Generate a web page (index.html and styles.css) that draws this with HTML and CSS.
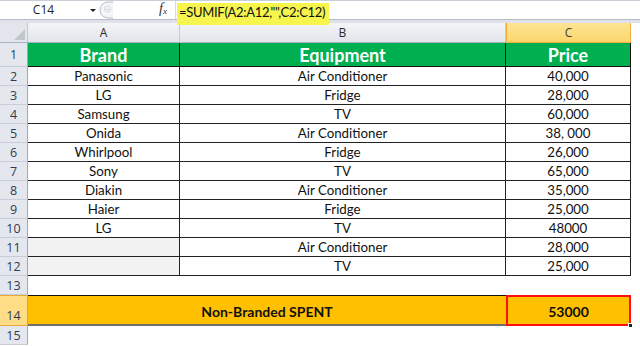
FILE: index.html
```html
<!DOCTYPE html>
<html>
<head>
<meta charset="utf-8">
<link rel="stylesheet" href="styles.css">
</head>
<body>
<div class="fbar">
  <div class="namebox">C14</div>
  <div class="nbarrow"><span class="tri"></span></div>
  <div class="mid">
    <svg class="pill" width="16" height="18" viewBox="0 0 16 18">
      <path d="M14 1 H9 A8 8 0 0 0 9 17 H14" fill="#f4f5f7" stroke="#b6bcc5" stroke-width="1"/>
      <circle cx="8.5" cy="8" r="3" fill="none" stroke="#d3d7dc" stroke-width="1"/>
      <path d="M6.5 8.5 H10.5" stroke="#d3d7dc" stroke-width="1"/>
    </svg>
    <span class="fx">f<sub>x</sub></span>
  </div>
  <div class="formula"><span class="hl">=SUMIF(A2:A12,"",C2:C12)</span></div>
</div>
<div class="gap"></div>
<div class="sheet">
  <div class="corner"><span class="ctri"></span></div>
  <div class="ch">A</div>
  <div class="ch">B</div>
  <div class="ch sel">C</div>
  <div class="blank"></div>

  <div class="rh">1</div>
  <div class="hd">Brand</div>
  <div class="hd">Equipment</div>
  <div class="hd">Price</div>
  <div class="blank"></div>

  <div class="rh">2</div><div class="c">Panasonic</div><div class="c">Air Conditioner</div><div class="c">40,000</div><div class="blank"></div>
  <div class="rh">3</div><div class="c">LG</div><div class="c">Fridge</div><div class="c">28,000</div><div class="blank"></div>
  <div class="rh">4</div><div class="c">Samsung</div><div class="c">TV</div><div class="c">60,000</div><div class="blank"></div>
  <div class="rh">5</div><div class="c">Onida</div><div class="c">Air Conditioner</div><div class="c">38, 000</div><div class="blank"></div>
  <div class="rh">6</div><div class="c">Whirlpool</div><div class="c">Fridge</div><div class="c">26,000</div><div class="blank"></div>
  <div class="rh">7</div><div class="c">Sony</div><div class="c">TV</div><div class="c">65,000</div><div class="blank"></div>
  <div class="rh">8</div><div class="c">Diakin</div><div class="c">Air Conditioner</div><div class="c">35,000</div><div class="blank"></div>
  <div class="rh">9</div><div class="c">Haier</div><div class="c">Fridge</div><div class="c">25,000</div><div class="blank"></div>
  <div class="rh">10</div><div class="c">LG</div><div class="c">TV</div><div class="c">48000</div><div class="blank"></div>
  <div class="rh">11</div><div class="c empty"></div><div class="c">Air Conditioner</div><div class="c">28,000</div><div class="blank"></div>
  <div class="rh">12</div><div class="c empty"></div><div class="c">TV</div><div class="c">25,000</div><div class="blank"></div>

  <div class="rh">13</div><div class="w"></div><div class="w"></div><div class="w"></div><div class="blank"></div>

  <div class="rh sel14">14</div>
  <div class="tot">Non-Branded SPENT</div>
  <div class="totv"><span class="handle"></span>53000</div>
  <div class="blank"></div>

  <div class="rh r15">15</div><div class="w"></div><div class="w"></div><div class="w"></div><div class="blank"></div>
</div>
</body>
</html>
```
FILE: styles.css
```css
* { box-sizing: border-box; }
html, body { margin: 0; padding: 0; background: #fff; }
body { width: 640px; height: 346px; overflow: hidden; font-family: Lato, "Liberation Sans", sans-serif; }

.fbar {
  height: 20px;
  display: flex;
  align-items: stretch;
  border-top: 1px solid #c9cfd7;
  border-bottom: 1px solid #b4bcc7;
  background: #fff;
}
.namebox {
  width: 87px;
  font-family: "Open Sans", "Liberation Sans", sans-serif;
  font-size: 12px;
  color: #1e1e1e;
  text-align: center;
  line-height: 18px;
}
.nbarrow { width: 12px; display: flex; align-items: center; justify-content: center; }
.tri { width: 0; height: 0; border-left: 3px solid transparent; border-right: 3px solid transparent; border-top: 3px solid #222; }
.mid {
  width: 76px;
  display: flex;
  align-items: center;
  justify-content: space-between;
  padding-right: 8px;
}
.pill { display: block; }
.fx {
  font-family: "Liberation Serif", serif;
  font-style: italic;
  font-size: 14px;
  color: #333;
  line-height: 18px;
}
.fx sub { font-size: 9px; vertical-align: -1px; }
.formula {
  flex: 1;
  border-left: 1px solid #d6dae0;
  padding-left: 1px;
  display: flex;
  align-items: flex-start;
}
.hl {
  position: relative;
  z-index: 2;
  margin-top: 2px;
  height: 22px;
  background: #f6f54e;
  padding: 0 4px 0 2px;
  font-family: Lato, "Liberation Sans", sans-serif;
  font-size: 13px;
  letter-spacing: -0.3px;
  line-height: 19px;
  color: #111;
}
.gap { height: 3px; background: #dfe3e9; }

.sheet {
  display: grid;
  grid-template-columns: 28px 152px 326px 125px 9px;
  grid-template-rows: 20px 24px repeat(12, 19px) 31px 19px;
}
.corner {
  background: #e3e7ed;
  border-right: 1px solid #c3c9d2;
  border-bottom: 1px solid #a9b3c0;
  position: relative;
}
.ctri {
  position: absolute; right: 2px; bottom: 2px;
  width: 0; height: 0;
  border-left: 11px solid transparent;
  border-bottom: 11px solid #c2c7cd;
}
.ch {
  background: linear-gradient(#f4f5f7, #e1e5ea);
  border-right: 1px solid #c3c9d2;
  border-bottom: 1px solid #a9b3c0;
  text-align: center;
  font-family: "Open Sans", "Liberation Sans", sans-serif;
  font-size: 12px;
  line-height: 19px;
  color: #2c2c2c;
}
.ch.sel {
  background: linear-gradient(#fde596, #fbd56a);
  border: 1px solid #f0b040;
  border-top: none;
  color: #3a3a3a;
}
.blank { background: #fff; }
.rh {
  background: #e4e8ee;
  border-right: 1px solid #9ea9b7;
  border-bottom: 1px solid #c8ced7;
  text-align: center;
  font-family: "Open Sans", "Liberation Sans", sans-serif;
  font-size: 12.5px;
  color: #2e3b52;
  display: flex; align-items: center; justify-content: center;
}
.hd {
  background: #00b050;
  color: #fff;
  font-weight: 700;
  font-size: 18px;
  border-right: 1px solid #111;
  border-bottom: 1px solid #111;
  display: flex; align-items: center; justify-content: center;
}
.c {
  background: #fff;
  color: #111;
  font-size: 13.3px;
  border-right: 1px solid #222;
  border-bottom: 1px solid #222;
  display: flex; align-items: center; justify-content: center;
}
.c.empty { background: #f2f2f2; }
.w { background: #fff; }
.sel14 {
  background: #fedd86;
  border-bottom: 1px solid #e8a93a;
  border-top: 1px solid #e8a93a;
  align-items: flex-end;
  padding-bottom: 1px;
}
.tot {
  grid-column: span 2;
  background: #ffc000;
  border-top: 1px solid #111;
  border-bottom: 2px solid #6f6f6f;
  font-weight: 700;
  font-size: 14px;
  color: #111;
  display: flex; align-items: center; justify-content: center;
  padding-top: 2px;
}
.totv {
  position: relative;
  background: #ffc000;
  border: 2px solid #ff1010;
  font-weight: 700;
  font-size: 14px;
  color: #111;
  display: flex; align-items: center; justify-content: center;
  padding-top: 1px;
}
.handle {
  position: absolute;
  right: -4px; bottom: -4px;
  width: 5px; height: 5px;
  background: #222;
  border: 1px solid #fff;
}
```
